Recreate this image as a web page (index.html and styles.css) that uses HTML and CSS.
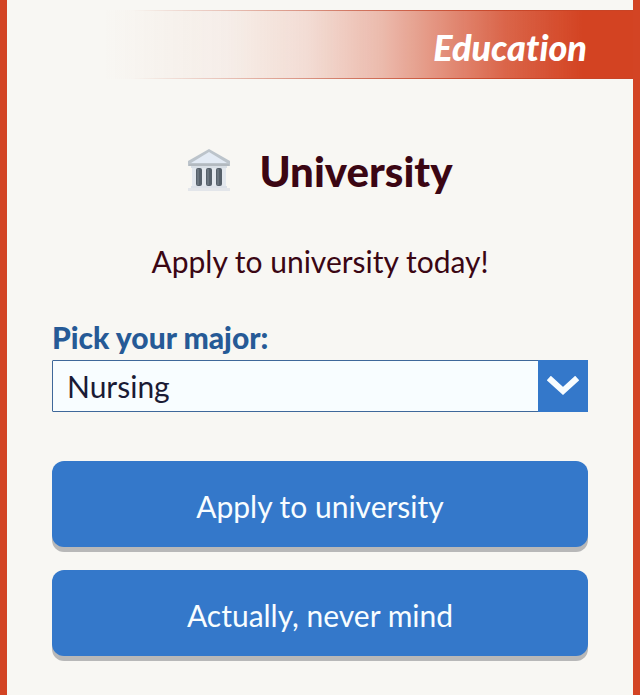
FILE: index.html
```html
<!DOCTYPE html>
<html lang="en">
<head>
    <meta charset="UTF-8">
    <meta name="viewport" content="width=device-width, initial-scale=1">
    <title>Education</title>
    <link rel="stylesheet" href="styles.css">
</head>
<body>
    <div class="page">
        <header class="banner">
            <h1>Education</h1>
        </header>

        <main class="content">
            <div class="title">
                <svg class="title-icon" viewBox="0 0 44 44" aria-hidden="true">
                    <path d="M5 17h34v21H5z" fill="#e3e8ee"/>
                    <path d="M22 0 43 12v5H1v-5z" fill="#bcc4cb"/>
                    <path d="M22 3 40 14H4z" fill="#e3ebf5"/>
                    <path d="M2 15h40v2H2z" fill="#b3bac0"/>
                    <path d="M4 17h36v2H4z" fill="#d8dfe6"/>
                    <rect x="9" y="19" width="6" height="18" rx="2" fill="#56606a"/>
                    <rect x="19" y="19" width="6" height="18" rx="2" fill="#56606a"/>
                    <rect x="29" y="19" width="6" height="18" rx="2" fill="#56606a"/>
                    <path d="M11 20v16M21 20v16M31 20v16" stroke="#7f8993" stroke-width="1"/>
                    <path d="M4 37h36v2H4z" fill="#dce1e8"/>
                    <path d="M1 39h42v3H1z" fill="#e3e6ea"/>
                </svg>
                <h2>University</h2>
            </div>

            <p class="intro">Apply to university today!</p>

            <form>
                <label for="major">Pick your major:</label>
                <div class="select-wrap">
                    <select id="major">
                        <option>Nursing</option>
                    </select>
                    <span class="select-arrow">
                        <svg viewBox="0 0 32 20" aria-hidden="true">
                            <path d="M4 4l12 11L28 4" fill="none" stroke="#f8fdff" stroke-width="6" stroke-linecap="square"/>
                        </svg>
                    </span>
                </div>

                <div class="buttons">
                    <button type="button" class="btn">Apply to university</button>
                    <button type="button" class="btn">Actually, never mind</button>
                </div>
            </form>
        </main>
    </div>
</body>
</html>
```

FILE: styles.css
```css
* {
    box-sizing: border-box;
}

body {
    margin: 0;
    font-family: Lato, sans-serif;
    font-size: 30px;
    font-variant-ligatures: none;
    background-color: #f8f7f3;
    color: #3b0613;
}

.page {
    min-height: 100vh;
    padding-top: 10px;
    border-left: 7px solid #d34424;
    border-right: 7px solid #d34424;
}

/* Banner */
.banner {
    padding: 18px 46px 12px;
    text-align: right;
    color: #fff;
    background: linear-gradient(to right, rgba(211, 67, 34, 0) 15%, rgba(211, 67, 34, 0.05) 35%, rgba(211, 67, 34, 0.15) 48%, rgba(211, 67, 34, 0.34) 60%, rgba(211, 67, 34, 0.56) 69%, rgba(211, 67, 34, 0.82) 80%, #d34322 92%);
    border: solid;
    border-width: 1px 0;
    border-image: linear-gradient(to right, rgba(190, 66, 40, 0) 20%, rgba(190, 66, 40, 0.6) 55%, #c84426 90%) 1;
}

.banner h1 {
    margin: 0;
    font-size: 36px;
    line-height: 37px;
    font-weight: 900;
    font-style: italic;
}

.content {
    padding: 64px 45px 36px;
}

.title {
    display: flex;
    justify-content: center;
    align-items: center;
    gap: 28px;
}

.title-icon {
    width: 44px;
    height: 44px;
}

.title h2 {
    margin: 0;
    font-size: 42px;
    line-height: 56px;
    font-weight: 900;
}

.intro {
    margin: 42px 0 38px;
    line-height: 40px;
    text-align: center;
}

/* Form */
label {
    display: block;
    font-size: 30px;
    line-height: 36px;
    font-weight: 900;
    color: #265a96;
}

.select-wrap {
    position: relative;
    margin-top: 5px;
}

select {
    display: block;
    width: 100%;
    height: 52px;
    padding: 0 64px 0 14px;
    border: 1px solid #3f689a;
    border-radius: 1px;
    appearance: none;
    background-color: #f8fdff;
    color: #1b1b35;
    font-family: inherit;
    font-size: 30px;
}

.select-arrow {
    position: absolute;
    top: 0;
    right: 0;
    bottom: 0;
    width: 50px;
    display: flex;
    align-items: center;
    justify-content: center;
    background-color: #3478ca;
    pointer-events: none;
}

.select-arrow svg {
    width: 32px;
    height: 20px;
}

.buttons {
    display: flex;
    flex-direction: column;
    gap: 23px;
    margin-top: 49px;
}

.btn {
    padding: 26px 16px 22px;
    border: none;
    border-radius: 12px;
    box-shadow: 0 5px 0 #b8b8b8;
    margin: 0;
    background-color: #3478ca;
    color: #f8fdff;
    font-family: inherit;
    font-size: 30px;
    line-height: 38px;
    cursor: pointer;
}

.btn:hover {
    background-color: #2c6ab6;
}
```
